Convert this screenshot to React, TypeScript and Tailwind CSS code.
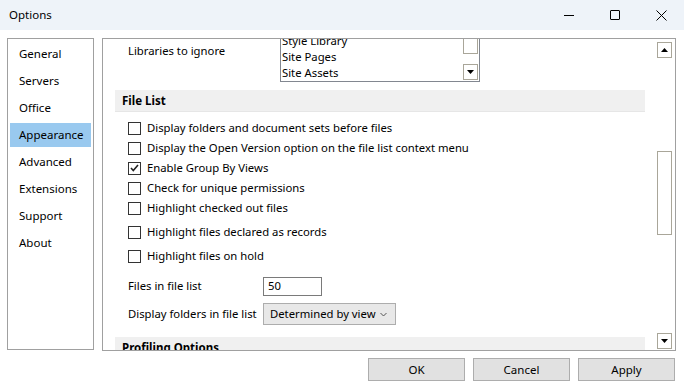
import React from 'react';

const NAV = ['General', 'Servers', 'Office', 'Appearance', 'Advanced', 'Extensions', 'Support', 'About'];

const CHECKS: { label: string; checked?: boolean; gap?: boolean }[] = [
  { label: 'Display folders and document sets before files' },
  { label: 'Display the Open Version option on the file list context menu' },
  { label: 'Enable Group By Views', checked: true },
  { label: 'Check for unique permissions' },
  { label: 'Highlight checked out files' },
  { label: 'Highlight files declared as records', gap: true },
  { label: 'Highlight files on hold', gap: true },
];

const font = { fontFamily: '"Segoe UI", "Noto Sans", Arial, sans-serif' };

function Arrow({ up }: { up?: boolean }) {
  return (
    <svg width="7" height="4" viewBox="0 0 7 4">
      {up ? <polygon points="0,4 7,4 3.5,0" fill="#000" /> : <polygon points="0,0 7,0 3.5,4" fill="#000" />}
    </svg>
  );
}

function ScrollBtn({ up }: { up?: boolean }) {
  return (
    <div className="w-[15px] h-[16px] border border-[#a9a699] bg-white flex items-center justify-center">
      <Arrow up={up} />
    </div>
  );
}

function Checkbox({ checked }: { checked?: boolean }) {
  return (
    <div className="w-[13px] h-[13px] border border-[#333] bg-white flex items-center justify-center shrink-0">
      {checked && (
        <svg width="9" height="8" viewBox="0 0 9 8">
          <polyline points="1,4 3.3,6.5 8,1" fill="none" stroke="#222" strokeWidth="1.6" />
        </svg>
      )}
    </div>
  );
}

function TitleBar() {
  return (
    <div className="h-[30px] bg-[#eef3f9] flex items-center pl-[9px] text-[11.5px] text-black">
      <span>Options</span>
      <div className="ml-auto flex items-center h-full">
        <div className="w-[46px] h-full flex items-center justify-center">
          <div className="w-[10px] h-px bg-black" />
        </div>
        <div className="w-[46px] h-full flex items-center justify-center">
          <div className="w-[10px] h-[10px] border border-black rounded-[1px]" />
        </div>
        <div className="w-[46px] h-full flex items-center justify-center">
          <svg width="11" height="11" viewBox="0 0 11 11">
            <path d="M0.5 0.5 L10.5 10.5 M10.5 0.5 L0.5 10.5" stroke="#000" strokeWidth="1" />
          </svg>
        </div>
      </div>
    </div>
  );
}

function Nav() {
  return (
    <div className="w-[87px] h-[312px] border border-[#a0a0a0] bg-white pt-[1px] px-[2px]">
      {NAV.map((n) => (
        <div key={n} className="h-[27px] flex items-center">
          <div
            className={`h-[24px] w-full flex items-center pl-[9px] text-[11.5px] text-black whitespace-nowrap ${
              n === 'Appearance' ? 'bg-[#99c9ef]' : ''
            }`}
          >
            {n}
          </div>
        </div>
      ))}
    </div>
  );
}

function SectionHeader({ title }: { title: string }) {
  return (
    <div className="w-[530px] h-[22px] bg-[#f0f0f0] border-b border-[#e6e6e6] flex items-center pl-[7px] text-[11.5px] font-bold text-black">
      {title}
    </div>
  );
}

function Content() {
  return (
    <div className="flex-1 overflow-hidden">
      <div className="-mt-[7px] pl-[12px]">
        <div className="flex">
          <div className="w-[165px] pl-[13px] pt-[11px] text-[11.3px] text-black whitespace-nowrap">Libraries to ignore</div>
          <div className="w-[200px] h-[50px] border border-[#828790] flex bg-white">
            <div className="flex-1 text-[11.3px] text-black leading-[16px] pl-[1px] whitespace-nowrap">
              <div className="h-[16px]">Style Library</div>
              <div className="h-[16px]">Site Pages</div>
              <div className="h-[16px]">Site Assets</div>
            </div>
            <div className="w-[17px] flex flex-col items-center -mt-[9px]">
              <div className="w-[15px] h-[30px] border border-[#a9a699] border-t-0" />
              <div className="flex-1" />
              <div className="mb-[1px]">
                <ScrollBtn />
              </div>
            </div>
          </div>
        </div>
        <div className="mt-[8px]">
          <SectionHeader title="File List" />
        </div>
        <div className="mt-[6px] pl-[13px]">
          {CHECKS.map((c) => (
            <div
              key={c.label}
              className={`h-5 flex items-center gap-[6px] text-[11.3px] text-black whitespace-nowrap ${c.gap ? 'mt-1' : ''}`}
            >
              <Checkbox checked={c.checked} />
              <span>{c.label}</span>
            </div>
          ))}
        </div>
        <div className="mt-[11px] pl-[13px] flex items-center text-[11.3px] text-black whitespace-nowrap">
          <div className="w-[135px]">Files in file list</div>
          <div className="w-[59px] h-[19px] border border-[#7a7a7a] bg-white pl-[4px] flex items-center">50</div>
        </div>
        <div className="mt-[7px] pl-[13px] flex items-center text-[11.3px] text-black whitespace-nowrap">
          <div className="w-[135px]">Display folders in file list</div>
          <div className="w-[133px] h-[22px] border border-[#adadad] bg-[#e8e8e8] pl-[6px] pr-[8px] flex items-center">
            <span>Determined by view</span>
            <svg className="ml-auto" width="7" height="5" viewBox="0 0 7 5">
              <polyline points="0.5,1 3.5,4 6.5,1" fill="none" stroke="#555" strokeWidth="1" />
            </svg>
          </div>
        </div>
        <div className="mt-[12px]">
          <SectionHeader title="Profiling Options" />
        </div>
      </div>
    </div>
  );
}

function ScrollBar() {
  return (
    <div className="w-[17px] flex flex-col items-center pt-[3px] pb-[1px] mr-[2px]">
      <ScrollBtn up />
      <div className="h-[93px]" />
      <div className="w-[15px] h-[84px] border border-[#a9a699] bg-white" />
      <div className="flex-1" />
      <ScrollBtn />
    </div>
  );
}

export default function App() {
  return (
    <div className="w-[684px] h-[389px] bg-white overflow-hidden flex flex-col" style={font}>
      <TitleBar />
      <div className="flex gap-[8px] pl-[7px] pt-[8px]">
        <Nav />
        <div className="w-[574px] h-[313px] border border-[#a0a0a0] bg-white flex">
          <Content />
          <ScrollBar />
        </div>
      </div>
      <div className="flex justify-end gap-[8px] pr-[9px] mt-[7px]">
        {['OK', 'Cancel', 'Apply'].map((b) => (
          <div
            key={b}
            className="w-[97px] h-[23px] border border-[#adadad] bg-[#e1e1e1] flex items-center justify-center text-[11.5px] text-black"
          >
            {b}
          </div>
        ))}
      </div>
    </div>
  );
}
